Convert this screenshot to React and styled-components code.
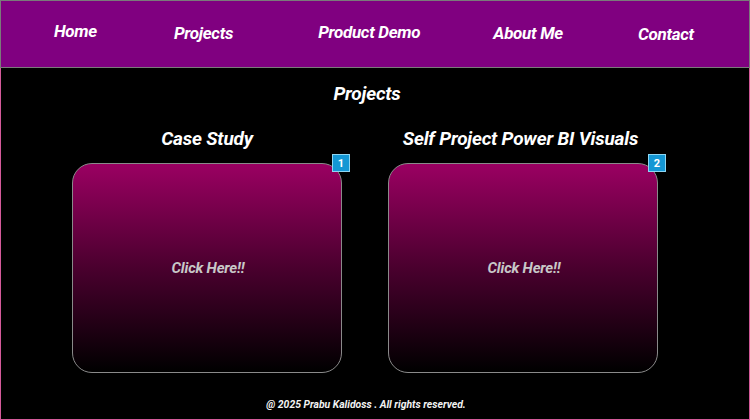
import styled, { createGlobalStyle } from "styled-components";

const Global = createGlobalStyle`
  body {
    margin: 0;
    background: #000;
    font-family: Roboto, "Liberation Sans", sans-serif;
  }
`;

const Page = styled.div`
  width: 750px;
  height: 420px;
  display: flex;
  flex-direction: column;
  box-sizing: border-box;
  background: #000;
`;

const Header = styled.nav`
  height: 68px;
  box-sizing: border-box;
  border: 1px solid #7a7a7a;
  background: #800080;
  display: flex;
  align-items: center;
  padding-left: 53px;
`;

const NavLink = styled.a`
  color: #fff;
  font-size: 17px;
  font-weight: 700;
  font-style: italic;
  text-decoration: none;
  margin-right: ${(p) => p.gap}px;
  transform: translateY(${(p) => p.dy}px);
  letter-spacing: -0.3px;
`;

const Main = styled.main`
  flex: 1;
  box-sizing: border-box;
  border: 1px solid #d45a9a;
  border-top: none;
  display: flex;
  flex-direction: column;
  align-items: center;
`;

const Heading = styled.h2`
  margin: 13px 16px 0 0;
  color: #fff;
  font-size: 19px;
  font-weight: 700;
  font-style: italic;
  line-height: 26px;
  letter-spacing: -0.2px;
`;

const Row = styled.div`
  display: flex;
  gap: 46px;
  margin-top: 19px;
  padding-right: 20px;
`;

const Column = styled.div`
  width: 270px;
  display: flex;
  flex-direction: column;
  align-items: center;
`;

const Title = styled.h3`
  margin: 0 ${(p) => p.shift}px 0 0;
  color: #fff;
  font-size: 19px;
  font-weight: 700;
  font-style: italic;
  line-height: 26px;
  letter-spacing: -0.2px;
  white-space: nowrap;
`;

const Card = styled.div`
  position: relative;
  margin-top: 11px;
  width: 270px;
  height: 210px;
  box-sizing: border-box;
  border: 1px solid #8a8a8a;
  border-radius: 20px;
  background: linear-gradient(to bottom, #9a0062 0%, #4a002e 50%, #000 100%);
  display: flex;
  align-items: center;
  justify-content: center;
`;

const ClickText = styled.span`
  color: #c8c8c8;
  font-size: 15px;
  font-weight: 700;
  font-style: italic;
  letter-spacing: -0.2px;
  margin-left: 2px;
`;

const Badge = styled.span`
  position: absolute;
  top: -10px;
  right: -9px;
  width: 18px;
  height: 18px;
  box-sizing: border-box;
  border: 1px solid #8fd6f2;
  background: #1497d4;
  color: #fff;
  font-size: 11px;
  font-weight: 700;
  display: flex;
  align-items: center;
  justify-content: center;
`;

const Footer = styled.footer`
  margin-top: auto;
  margin-bottom: 8px;
  margin-right: 18px;
  color: #f2f2f2;
  font-size: 10.4px;
  font-weight: 700;
  font-style: italic;
`;

const links = [
  { label: "Home", gap: 77, dy: -3 },
  { label: "Projects", gap: 85, dy: -1 },
  { label: "Product Demo", gap: 73, dy: -2 },
  { label: "About Me", gap: 75, dy: -1 },
  { label: "Contact", gap: 0, dy: 0 },
];

const projects = [
  { title: "Case Study", n: 1, shift: 0 },
  { title: "Self Project Power BI Visuals", n: 2, shift: 5 },
];

export default function App() {
  return (
    <Page>
      <Global />
      <Header>
        {links.map((l) => (
          <NavLink key={l.label} href="#" gap={l.gap} dy={l.dy}>
            {l.label}
          </NavLink>
        ))}
      </Header>
      <Main>
        <Heading>Projects</Heading>
        <Row>
          {projects.map((p) => (
            <Column key={p.n}>
              <Title shift={p.shift}>{p.title}</Title>
              <Card>
                <Badge>{p.n}</Badge>
                <ClickText>Click Here!!</ClickText>
              </Card>
            </Column>
          ))}
        </Row>
        <Footer>@ 2025 Prabu Kalidoss . All rights reserved.</Footer>
      </Main>
    </Page>
  );
}
